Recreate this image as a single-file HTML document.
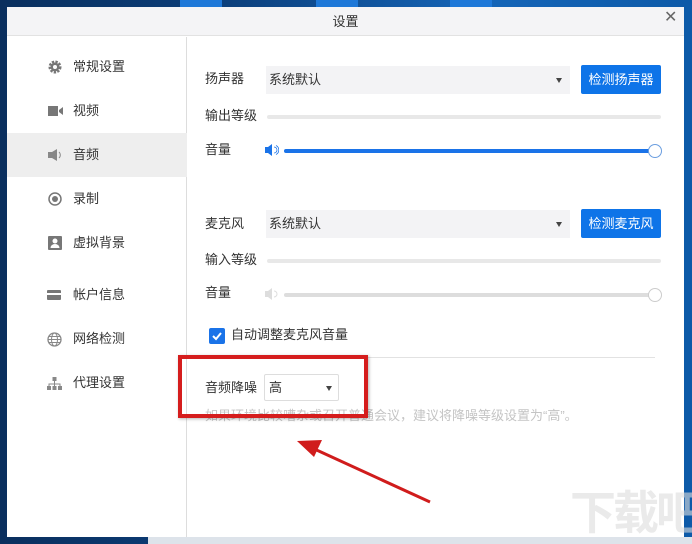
<!DOCTYPE html><html><head><meta charset="utf-8"><style>
*{margin:0;padding:0;box-sizing:border-box}
html,body{width:692px;height:544px;overflow:hidden}
body{position:relative;background:linear-gradient(90deg,#0a2f5e 0%,#0b3d78 30%,#1565b8 70%,#0d5aa8 100%);font-family:"Liberation Sans","Noto Sans CJK SC",sans-serif;font-size:13px;line-height:16px;color:#333}
.a{position:absolute;white-space:nowrap}
.win{left:7px;top:7px;width:677px;height:530px;background:#fff}
.title{left:7px;top:7px;width:677px;height:29px;background:#f4f4f6;border-bottom:1px solid #e2e2e2;text-align:center;line-height:29px;font-size:13px;color:#333}
.side{left:7px;top:37px;width:180px;height:500px;border-right:1px solid #ddd}
.it{left:73px;font-size:13px;color:#333}
.sel{background:#f3f3f5;height:28px;line-height:28px;padding-left:3px}
.btn{background:#0e74e8;color:#fff;border-radius:2px;text-align:center;line-height:29px;height:29px;width:80px}
.tri{width:0;height:0;border-left:3px solid transparent;border-right:3px solid transparent;border-top:5px solid #444}
.bar{height:4px;border-radius:2px;background:#e8e8e8}
</style></head><body>
<div class="a" style="left:180px;top:0;width:42px;height:7px;background:#1e78d8"></div>
<div class="a" style="left:316px;top:0;width:42px;height:7px;background:#1e78d8"></div>
<div class="a" style="left:450px;top:0;width:42px;height:7px;background:#1e78d8"></div>
<div class="a" style="left:148px;top:537px;width:544px;height:7px;background:#dde3ea"></div>
<div class="a win"></div>
<div class="a title">设置</div>
<div class="a" style="left:664px;top:10px;font-size:16px;color:#666">✕</div>
<div class="a side"></div>
<div class="a" style="left:7px;top:133px;width:180px;height:44px;background:#eeeeee"></div>
<svg class="a" style="left:47px;top:59px" width="16" height="16" viewBox="0 0 16 16"><circle cx="8" cy="8" r="5" fill="none" stroke="#777" stroke-width="3" stroke-dasharray="2.2 1.2"/><circle cx="8" cy="8" r="4.5" fill="#777"/><circle cx="8" cy="8" r="2" fill="#fff"/></svg>
<div class="a it" style="top:59px">常规设置</div>
<svg class="a" style="left:48px;top:105px" width="16" height="12"><rect x="0" y="1" width="10" height="10" fill="#777"/><path d="M11 5 L15 2 L15 10 L11 7Z" fill="#777"/></svg>
<div class="a it" style="top:103px">视频</div>
<svg class="a" style="left:48px;top:149px" width="16" height="12"><path d="M0 3h4l5-3v12l-5-3H0z" fill="#888"/><path d="M11 3a4 4 0 0 1 0 6" stroke="#888" fill="none"/></svg>
<div class="a it" style="top:147px">音频</div>
<svg class="a" style="left:48px;top:192px" width="14" height="14"><circle cx="7" cy="7" r="6" fill="none" stroke="#777" stroke-width="1.5"/><circle cx="7" cy="7" r="3" fill="#777"/></svg>
<div class="a it" style="top:191px">录制</div>
<svg class="a" style="left:48px;top:236px" width="14" height="14"><rect width="14" height="14" rx="1" fill="#777"/><circle cx="7" cy="5" r="2.5" fill="#fff"/><path d="M2.5 12a4.5 4 0 0 1 9 0z" fill="#fff"/></svg>
<div class="a it" style="top:235px">虚拟背景</div>
<svg class="a" style="left:47px;top:290px" width="14" height="10"><rect width="14" height="10" rx="1" fill="#777"/><rect y="3" width="14" height="2" fill="#fff"/></svg>
<div class="a it" style="top:287px">帐户信息</div>
<svg class="a" style="left:47px;top:332px" width="15" height="15"><circle cx="7.5" cy="7.5" r="6.5" fill="none" stroke="#888" stroke-width="1.3"/><ellipse cx="7.5" cy="7.5" rx="3" ry="6.5" fill="none" stroke="#888"/><path d="M1 7.5h13M2 4.5h11M2 10.5h11" stroke="#888"/></svg>
<div class="a it" style="top:331px">网络检测</div>
<svg class="a" style="left:47px;top:377px" width="15" height="13"><rect x="5.5" y="0" width="4" height="4" fill="#888"/><rect x="0" y="9" width="4" height="4" fill="#888"/><rect x="5.5" y="9" width="4" height="4" fill="#888"/><rect x="11" y="9" width="4" height="4" fill="#888"/><path d="M7.5 4v3M2 9V7h11v2M7.5 7v2" stroke="#888" fill="none"/></svg>
<div class="a it" style="top:375px">代理设置</div>

<div class="a" style="left:205px;top:71px">扬声器</div>
<div class="a sel" style="left:266px;top:66px;width:304px">系统默认</div>
<div class="a tri" style="left:556px;top:78px"></div>
<div class="a btn" style="left:581px;top:65px">检测扬声器</div>
<div class="a" style="left:205px;top:108px">输出等级</div>
<div class="a bar" style="left:267px;top:115px;width:394px"></div>
<div class="a" style="left:205px;top:142px">音量</div>
<svg class="a" style="left:265px;top:144px" width="14" height="12"><path d="M0 3h3l4-3v12l-4-3H0z" fill="#1a73e8"/><path d="M9 3a3 3 0 0 1 0 6M11 1.5a5 5 0 0 1 0 9" stroke="#1a73e8" fill="none" stroke-width=".8"/></svg>
<div class="a" style="left:284px;top:149px;width:366px;height:4px;border-radius:2px;background:#1a73e8"></div>
<div class="a" style="left:648px;top:144px;width:14px;height:14px;border-radius:50%;background:#fff;border:1px solid #6b9ee0"></div>

<div class="a" style="left:205px;top:216px">麦克风</div>
<div class="a sel" style="left:266px;top:210px;width:304px">系统默认</div>
<div class="a tri" style="left:556px;top:222px"></div>
<div class="a btn" style="left:581px;top:209px">检测麦克风</div>
<div class="a" style="left:205px;top:252px">输入等级</div>
<div class="a bar" style="left:267px;top:259px;width:394px"></div>
<div class="a" style="left:205px;top:285px">音量</div>
<svg class="a" style="left:265px;top:288px" width="14" height="12"><path d="M0 3h3l4-3v12l-4-3H0z" fill="#ddd"/><path d="M9 3a3 3 0 0 1 0 6" stroke="#ddd" fill="none"/></svg>
<div class="a" style="left:284px;top:293px;width:366px;height:4px;border-radius:2px;background:#ddd"></div>
<div class="a" style="left:648px;top:288px;width:14px;height:14px;border-radius:50%;background:#fff;border:1px solid #ccc"></div>
<div class="a" style="left:209px;top:328px;width:16px;height:16px;border-radius:2px;background:#1a73e8"></div>
<svg class="a" style="left:209px;top:328px" width="16" height="16"><path d="M4 8l3 3 5-6" stroke="#fff" stroke-width="2" fill="none"/></svg>
<div class="a" style="left:231px;top:327px">自动调整麦克风音量</div>
<div class="a" style="left:193px;top:357px;width:462px;height:1px;background:#e2e2e2"></div>
<div class="a" style="left:205px;top:380px">音频降噪</div>
<div class="a" style="left:264px;top:374px;width:75px;height:27px;border:1px solid #ddd;border-radius:2px;line-height:25px;padding-left:4px">高</div>
<div class="a tri" style="left:326px;top:386px"></div>
<div class="a" style="left:205px;top:408px;color:#c4c4c4">如果环境比较嘈杂或召开普通会议，建议将降噪等级设置为“高”。</div>
<div class="a" style="left:178px;top:355px;width:190px;height:63px;border:4px solid #d51d1d;box-shadow:1px 1px 3px rgba(0,0,0,.3)"></div>
<svg class="a" style="left:0;top:0" width="692" height="544"><line x1="430" y1="502" x2="310" y2="447" stroke="#d01c1c" stroke-width="3"/><path d="M297 441 L322 440 L314 457Z" fill="#d01c1c"/></svg>
<div class="a" style="left:570px;top:488px;font-size:46px;line-height:50px;color:rgba(220,220,220,.6);font-weight:bold;letter-spacing:-3px">下载吧</div>
</body></html>
